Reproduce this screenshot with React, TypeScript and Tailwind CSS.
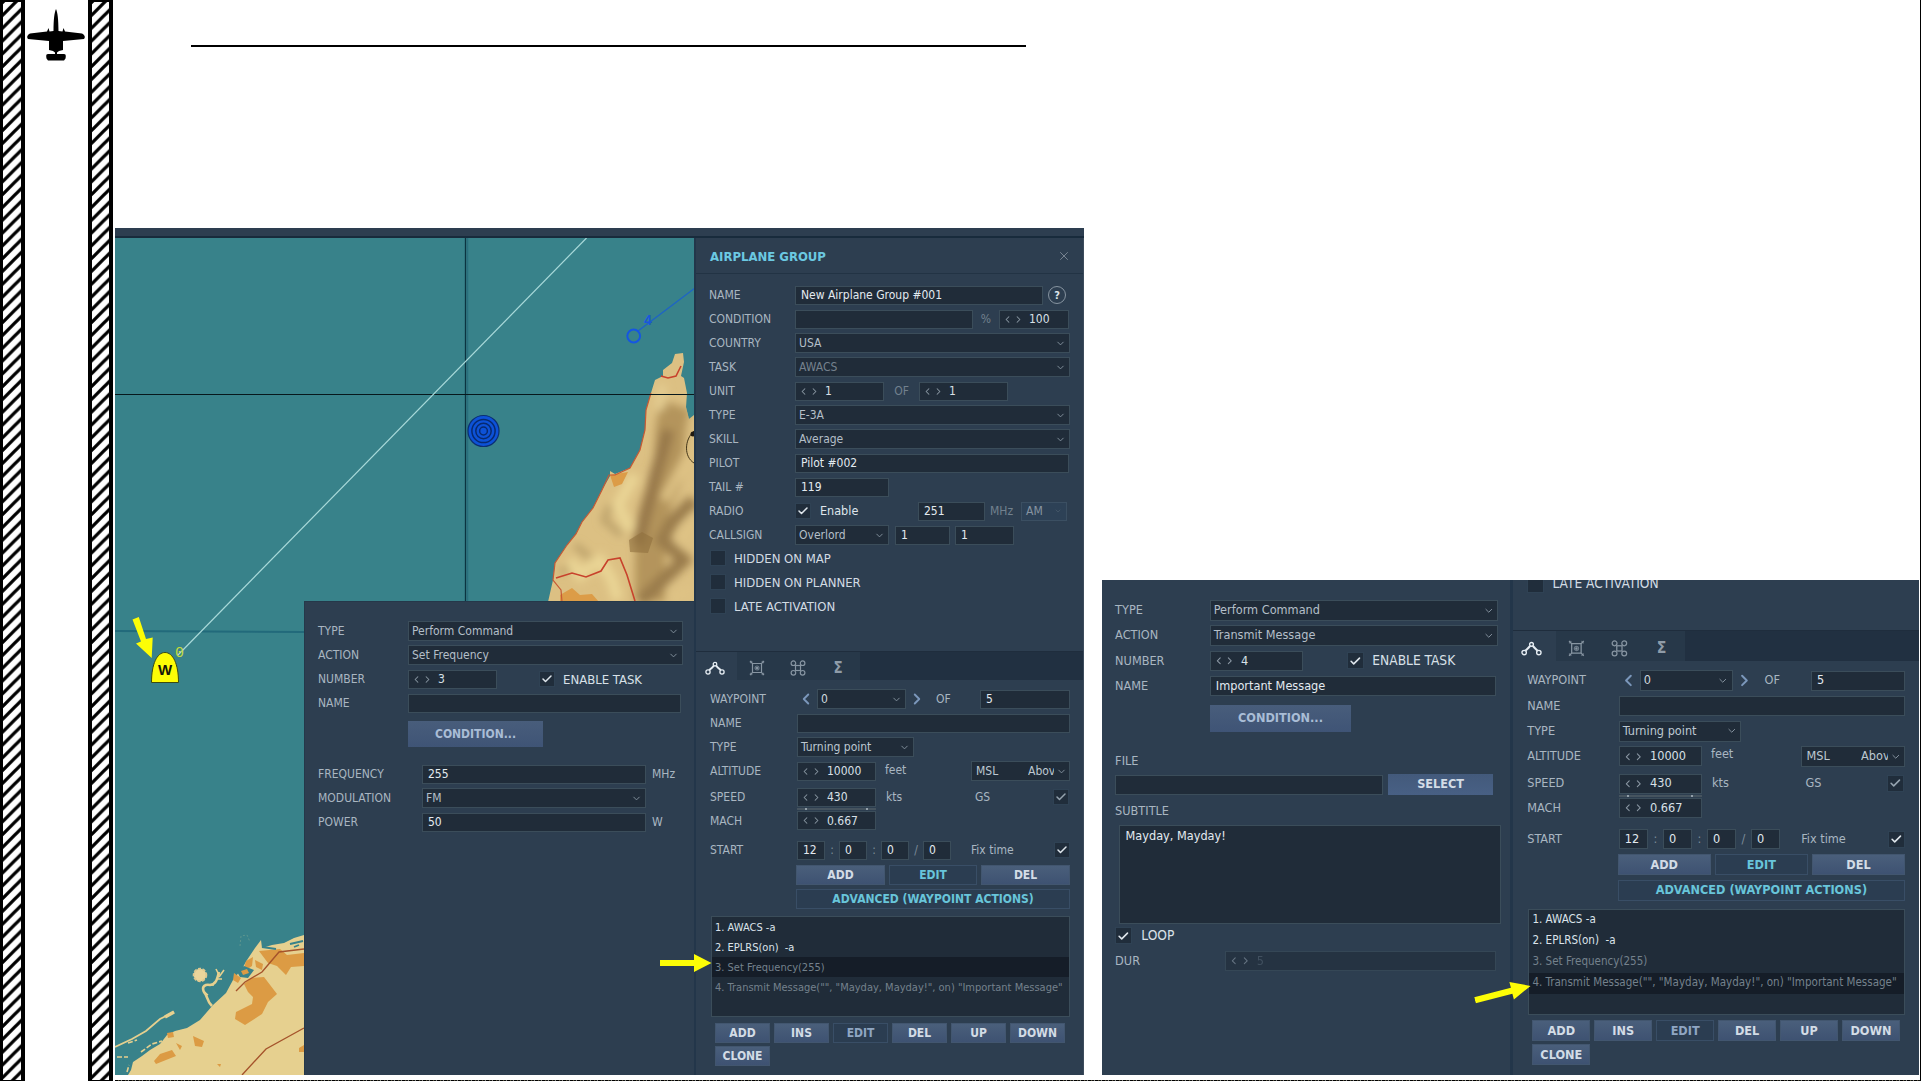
import React from "react";
import { Check, ChevronDown, ChevronLeft, ChevronRight, X } from "lucide-react";

const FIELD = "flex items-center shrink-0 box-border bg-[#202c39] border border-[#3b4d5a] whitespace-pre overflow-hidden";
const BTN =
  "flex items-center justify-center shrink-0 h-5 bg-gradient-to-b from-[#4a5f7b] to-[#3e5272] border border-[#42566f] font-bold text-[#d3dce6]";
const BTN_FLAT =
  "flex items-center justify-center shrink-0 h-5 bg-[#2b3d51] border border-[#394e66] font-bold";

function Field({ w, children = "", className = "" }: { w: string; children?: React.ReactNode; className?: string }) {
  return <div className={`${FIELD} h-[19px] pl-[5px] text-[#e3eaf0] ${w} ${className}`}>{children}</div>;
}

function Select({ w, children, className = "text-[#b4bfc8]" }: { w: string; children: React.ReactNode; className?: string }) {
  return (
    <div className={`${FIELD} h-5 pl-[3px] pr-[3px] justify-between ${w} ${className}`}>
      <span>{children}</span>
      <ChevronDown size={11} strokeWidth={2} className="text-[#8795a1] shrink-0" />
    </div>
  );
}

function Spin({ w, children, className = "" }: { w: string; children: React.ReactNode; className?: string }) {
  return (
    <div className={`${FIELD} h-[19px] pl-[2px] text-[#d8e0e7] ${w} ${className}`}>
      <ChevronLeft size={11} strokeWidth={2.2} className="text-[#8b98a4] shrink-0" />
      <ChevronRight size={11} strokeWidth={2.2} className="text-[#8b98a4] shrink-0" />
      <span className="ml-[5px]">{children}</span>
    </div>
  );
}

function Box({ checked = false, dim = false }: { checked?: boolean; dim?: boolean }) {
  return (
    <div className="flex items-center justify-center shrink-0 size-4 bg-[#202d3b] border border-[#2f4254]">
      {checked && <Check size={12} strokeWidth={3} className={dim ? "text-[#95a3af]" : "text-[#dfe6ec]"} />}
    </div>
  );
}

function Row({ label, lw = "w-[86px]", className = "h-6", children }: { label: string; lw?: string; className?: string; children?: React.ReactNode }) {
  return (
    <div className={`flex items-center shrink-0 ${className}`}>
      <div className={`${lw} shrink-0 text-[#a9b6c1]`}>{label}</div>
      {children}
    </div>
  );
}

function RouteIcon() {
  return (
    <svg width="20" height="14" viewBox="0 0 20 14" fill="none" stroke="#e6edf3" strokeWidth="1.3">
      <circle cx="3" cy="11" r="2.1" />
      <circle cx="17" cy="11" r="2.1" />
      <circle cx="10" cy="3.2" r="1.8" />
      <path d="M4.2 9.2C5.5 8 7.5 6.5 8.7 4.7M11.3 4.7C12.5 6.5 14.5 8 15.8 9.2" strokeWidth="2" />
    </svg>
  );
}

function TargetIcon() {
  return (
    <svg width="16" height="16" viewBox="0 0 16 16" fill="none" stroke="#8795a2" strokeWidth="1.2">
      <path d="M3.5 3.5h9v9h-9zM1 1l3 3M15 1l-3 3M1 15l3-3M15 15l-3-3" />
      <path d="M1 3.2 3.2 1M15 3.2 12.8 1M1 12.8 3.2 15M15 12.8 12.800 15" strokeOpacity=".6" />
      <circle cx="8" cy="8" r="2" strokeOpacity=".7" />
      <circle cx="8" cy="8" r=".6" />
    </svg>
  );
}

function CommandIcon() {
  return (
    <svg width="16" height="16" viewBox="0 0 16 16" fill="none" stroke="#8795a2" strokeWidth="1.2">
      <rect x="5.5" y="5.5" width="5" height="5" />
      <circle cx="3.4" cy="3.2" r="2.3" />
      <circle cx="12.6" cy="3.2" r="2.3" />
      <circle cx="3.4" cy="12.8" r="2.3" />
      <circle cx="12.6" cy="12.8" r="2.3" />
    </svg>
  );
}

function FlagRow({ label }: { label: string }) {
  return (
    <div className="flex items-center shrink-0 h-6 gap-2 pl-px text-[13px] text-[#d3dce4]">
      <Box />
      {label}
    </div>
  );
}

function GroupForm() {
  return (
    <>
      <div className="flex items-center justify-between h-9 shrink-0 pl-[14px] pr-3 pt-px border-b border-[#223344]">
        <span className="font-bold text-[13px] text-[#6bc9e2]">AIRPLANE GROUP</span>
        <X size={14} strokeWidth={1.7} className="text-[#778491]" />
      </div>
      <div className="flex flex-col pl-[13px] pt-[9px] h-[377px] shrink-0">
        <Row label="NAME">
          <Field w="w-[248px]">New Airplane Group #001</Field>
          <div className="flex items-center justify-center ml-[5px] size-[18px] rounded-full border border-[#8794a0] font-bold text-[11px] text-[#dce4ea]">?</div>
        </Row>
        <Row label="CONDITION">
          <Field w="w-[178px]" />
          <span className="w-[26px] text-center text-[#72818e]">%</span>
          <Spin w="w-[70px]">100</Spin>
        </Row>
        <Row label="COUNTRY"><Select w="w-[275px]">USA</Select></Row>
        <Row label="TASK"><Select w="w-[275px]" className="text-[#75818d]">AWACS</Select></Row>
        <Row label="UNIT">
          <Spin w="w-[89px]">1</Spin>
          <span className="w-[35px] text-center text-[#72818e]">OF</span>
          <Spin w="w-[89px]">1</Spin>
        </Row>
        <Row label="TYPE"><Select w="w-[275px]">E-3A</Select></Row>
        <Row label="SKILL"><Select w="w-[275px]">Average</Select></Row>
        <Row label="PILOT"><Field w="w-[274px]">Pilot #002</Field></Row>
        <Row label="TAIL #"><Field w="w-[94px]">119</Field></Row>
        <Row label="RADIO">
          <Box checked />
          <span className="w-[107px] pl-[9px] pt-px text-[12.5px] text-[#dfe6ec]">Enable</span>
          <Field w="w-[67px]">251</Field>
          <span className="w-[36px] pl-[5px] text-[#72818e]">MHz</span>
          <div className="flex items-center justify-between h-[19px] w-[46px] pl-1 pr-1 bg-[#2d4156] border border-[#3b4f62] text-[#8794a1]">
            AM
            <ChevronDown size={8} className="text-[#4b5d6e]" />
          </div>
        </Row>
        <Row label="CALLSIGN">
          <Select w="w-[94px]">Overlord</Select>
          <Field w="w-[55px]" className="ml-[6px]">1</Field>
          <Field w="w-[59px]" className="ml-[5px]">1</Field>
        </Row>
        <div className="flex flex-col -mt-px">
          <FlagRow label="HIDDEN ON MAP" />
          <FlagRow label="HIDDEN ON PLANNER" />
          <FlagRow label="LATE ACTIVATION" />
        </div>
      </div>
    </>
  );
}

function AirplanePanel({ selected, scrolled = false }: { selected: number; scrolled?: boolean }) {
  const actions = [
    "1. AWACS -a",
    "2. EPLRS(on)  -a",
    "3. Set Frequency(255)",
    '4. Transmit Message("", "Mayday, Mayday!", on) "Important Message"',
  ];
  return (
    <div className="flex flex-col w-[388px] shrink-0 bg-[#2d3e50] border-r border-[#3d4c5c] overflow-hidden">
      {scrolled ? (
        <div className="flex flex-col h-[48px] shrink-0 pl-[13px]">
          <div className="-mt-2"><FlagRow label="LATE ACTIVATION" /></div>
        </div>
      ) : (
        <GroupForm />
      )}
      <div className="flex shrink-0 h-[29px] bg-[#213041] border-t border-[#1f2d3d]">
        <div className="flex items-center justify-center w-[41px] pt-1 pr-1 bg-[#2d3e50]"><RouteIcon /></div>
        <div className="flex items-center justify-center w-[40px] pt-1 bg-[#273849]"><TargetIcon /></div>
        <div className="flex items-center justify-center w-[41px] pt-1 bg-[#273849]"><CommandIcon /></div>
        <div className="flex items-center justify-center w-[42px] pt-1 pr-[2px] bg-[#273849] font-bold text-[15px] text-[#8f9ca8]">Σ</div>
      </div>
      <div className="flex flex-col pl-[14px] pt-[7px]">
        <Row label="WAYPOINT" lw="w-[87px]">
          <div className="flex items-center justify-center w-[20px] pr-[2px] text-[#7b97bb]"><ChevronLeft size={18} strokeWidth={2.5} /></div>
          <Select w="w-[89px]" className="text-[#cfd8df]">0</Select>
          <div className="flex items-center justify-center w-[22px] text-[#7b97bb]"><ChevronRight size={18} strokeWidth={2.5} /></div>
          <span className="w-[52px] pl-2 text-[#a9b6c1]">OF</span>
          <Field w="w-[90px]" className="text-[#cfd8df]">5</Field>
        </Row>
        <Row label="NAME" lw="w-[87px]"><Field w="w-[273px]" /></Row>
        <Row label="TYPE" lw="w-[87px]"><Select w="w-[117px]" className="text-[#bdc8d1]">Turning point</Select></Row>
        <Row label="ALTITUDE" lw="w-[87px]">
          <Spin w="w-[79px]">10000</Spin>
          <span className="w-[95px] pl-[9px] pb-[3px] text-[#a9b6c1]">feet</span>
          <div className={`${FIELD} h-5 w-[99px] pl-1 pr-[3px] text-[#bdc8d1]`}>
            <span className="w-[52px] shrink-0">MSL</span>
            <span className="w-[26px] shrink-0 overflow-hidden">Above</span>
            <ChevronDown size={11} className="ml-[2px] text-[#8795a1] shrink-0" />
          </div>
        </Row>
        <Row label="SPEED" lw="w-[87px]" className="h-[22px] mt-[3px]">
          <Spin w="w-[79px]">430</Spin>
          <span className="w-[99px] pl-[10px] text-[#a9b6c1]">kts</span>
          <span className="w-[78px] text-[#a9b6c1]">GS</span>
          <Box checked dim />
        </Row>
        <div className="flex justify-between ml-[87px] w-[79px] h-[2px] px-[8px] bg-[#46545f]">
          <span className="w-[2px] bg-[#93a0aa]" />
          <span className="w-[2px] bg-[#93a0aa]" />
        </div>
        <Row label="MACH" lw="w-[87px]" className="h-[21px]"><Spin w="w-[79px]">0.667</Spin></Row>
        <Row label="START" lw="w-[87px]" className="h-5 mt-[9px]">
          <Field w="w-7">12</Field>
          <span className="w-[14px] text-center text-[#7c8b98]">:</span>
          <Field w="w-7">0</Field>
          <span className="w-[14px] text-center text-[#7c8b98]">:</span>
          <Field w="w-7">0</Field>
          <span className="w-[14px] text-center text-[#7c8b98]">/</span>
          <Field w="w-7">0</Field>
          <span className="w-[103px] pl-5 text-[#a9b6c1]">Fix time</span>
          <Box checked />
        </Row>
        <div className="flex gap-1 mt-[4.5px] ml-[86px]">
          <div className={`${BTN} w-[89px]`}>ADD</div>
          <div className={`${BTN_FLAT} w-[88px] text-[#68c5da]`}>EDIT</div>
          <div className={`${BTN} w-[89px]`}>DEL</div>
        </div>
        <div className={`${BTN_FLAT} mt-1 ml-[86px] w-[274px] text-[#68c5da]`}>ADVANCED (WAYPOINT ACTIONS)</div>
        <div className="flex flex-col mt-[7.5px] ml-px w-[359px] h-[101px] bg-[#202c39] border border-[#3b4d5a] text-[11px] whitespace-pre">
          {actions.map((t, i) => (
            <div
              key={t}
              className={`flex items-center h-5 pl-[3px] ${i === selected ? "bg-[#151d28]" : ""} ${i < 2 ? "text-[#dbe3ea]" : "text-[#74818c]"}`}
            >
              {t}
            </div>
          ))}
        </div>
        <div className="flex flex-wrap gap-x-1 gap-y-[3px] mt-[5.5px] ml-[5px] w-[356px]">
          {["ADD", "INS", "EDIT", "DEL", "UP", "DOWN", "CLONE"].map((t) =>
            t === "EDIT" ? (
              <div key={t} className={`${BTN_FLAT} w-[55px] text-[#8fa6c2]`}>{t}</div>
            ) : (
              <div key={t} className={`${BTN} w-[55px]`}>{t}</div>
            ),
          )}
        </div>
      </div>
    </div>
  );
}

function CommandHead({ action, number, name }: { action: string; number: string; name: string }) {
  return (
    <>
      <Row label="TYPE" lw="w-[90px]"><Select w="w-[275px]">Perform Command</Select></Row>
      <Row label="ACTION" lw="w-[90px]"><Select w="w-[275px]">{action}</Select></Row>
      <Row label="NUMBER" lw="w-[90px]">
        <Spin w="w-[89px]">{number}</Spin>
        <div className="flex items-center gap-2 ml-[42px] text-[13px] text-[#d9e1e8]"><Box checked />ENABLE TASK</div>
      </Row>
      <Row label="NAME" lw="w-[90px]"><Field w="w-[273px]">{name}</Field></Row>
      <div className="flex items-center justify-center shrink-0 mt-[6px] ml-[90px] w-[135px] h-[26px] bg-gradient-to-b from-[#485d7b] to-[#3f5476] font-bold text-[#a9bdd6]">
        CONDITION...
      </div>
    </>
  );
}

function FrequencyPanel() {
  return (
    <div className="relative flex flex-col w-[390px] h-[474px] pl-[13px] pt-[17px] bg-[#2d3e50] border-t border-l border-[#25384a]">
      <CommandHead action="Set Frequency" number="3" name="" />
      <div className="flex flex-col mt-[15px]">
        <Row label="FREQUENCY" lw="w-[104px]"><Field w="w-[224px]">255</Field><span className="ml-[6px] text-[#a9b6c1]">MHz</span></Row>
        <Row label="MODULATION" lw="w-[104px]"><Select w="w-[224px]">FM</Select></Row>
        <Row label="POWER" lw="w-[104px]"><Field w="w-[224px]">50</Field><span className="ml-[6px] text-[#a9b6c1]">W</span></Row>
      </div>
    </div>
  );
}

function MessagePanel() {
  return (
    <div className="flex flex-col w-[389px] shrink-0 pl-[12.5px] pt-[17px] bg-[#2d3e50]">
      <CommandHead action="Transmit Message" number="4" name="Important Message" />
      <div className="mt-[16px] h-6 flex items-center text-[#a9b6c1]">FILE</div>
      <div className="flex items-center">
        <Field w="w-[255px]" className="h-5" />
        <div className="flex items-center justify-center ml-[5px] w-[100px] h-5 bg-gradient-to-b from-[#435a7b] to-[#486085] font-bold text-[#d3dce6]">SELECT</div>
      </div>
      <div className="mt-[5px] h-5 flex items-center text-[#a9b6c1]">SUBTITLE</div>
      <div className="mt-[3px] ml-[4px] w-[364px] h-[95px] pl-[5px] pt-[4px] bg-[#202c39] border border-[#3b4d5a] text-[#e3eaf0]">Mayday, Mayday!</div>
      <div className="flex items-center gap-[9px] mt-[3px] text-[13px] text-[#d9e1e8]"><Box checked />LOOP</div>
      <div className="flex items-center mt-[4px] h-6 text-[#a9b6c1]">
        <span className="w-[105px]">DUR</span>
        <div className="opacity-60"><Spin w="w-[258px]"><span className="text-[#4f5d6a]">5</span></Spin></div>
      </div>
    </div>
  );
}

function Relief() {
  return (
    <>
      <defs>
        <filter id="soft" x="-20%" y="-20%" width="140%" height="140%"><feGaussianBlur stdDeviation="4.5" /></filter>
        <clipPath id="cape">
          <path d="M683 353 675 354 672 363 663 370 663 376 655 380 651 393 646 410 645 430 640 450 630 468 615 474 610 471 610 476 602 490 593 508 582 522 576 534 567 545 555 563 553 580 548 602 694 602 694 415 689 419 686 407 687 393 684 378 681 376 684 362Z" />
        </clipPath>
      </defs>
      <g clipPath="url(#cape)">
        <rect x="540" y="345" width="160" height="260" fill="#dcc083" />
        <g filter="url(#soft)" fill="none">
          <path d="M676 405C664 440 676 460 662 490S650 540 650 602" stroke="#b4945c" strokeWidth="30" />
          <path d="M668 430C664 450 656 468 652 490L644 520 638 545" stroke="#96774a" strokeWidth="12" />
          <path d="M694 500 672 522 662 540 684 560 640 602" stroke="#9a7b4b" strokeWidth="13" />
          <path d="M610 505 604 520 622 535M575 545 590 558M560 572 575 566" stroke="#b89e68" strokeWidth="6" />
          <path d="M694 445 676 478 664 500M694 515 680 545M690 590 670 600" stroke="#dfc385" strokeWidth="9" />
          <path d="M635 475 618 505 630 530M570 560 580 575 600 560 612 580 618 600" stroke="#ead595" strokeWidth="11" />
          <path d="M662 385 660 410" stroke="#e4cd92" strokeWidth="9" />
        </g>
        <path d="M629 540 642 532 653 538 648 553 630 552Z" fill="#8f6f3d" opacity=".6" />
        <path d="M610 475 628 472 622 484 614 487ZM560 595 572 588 580 595 592 594 599 602H560ZM641 446 636 458 630 465Z" fill="#dc9c47" />
      </g>
      <path d="M651 393 646 410 645 430 640 450 630 468 615 475 609 475 602 490 593 508 582 522 576 534 567 545 555 563 553 580 561 590 562 602" fill="none" stroke="#c65a35" strokeWidth="1.2" />
      <path d="M661 376 668 378 676 376 681 366M556 578 572 573 586 577 601 571 608 560 620 558 627 575 635 601" fill="none" stroke="#c8422c" strokeWidth="1.6" />
      <path d="M694 431C684 440 684 457 694 463" fill="none" stroke="#443619" />
      <circle cx="693" cy="434" r="2.5" fill="#201a10" />
    </>
  );
}

function DubaiCoast() {
  return (
    <>
      <path d="M304 935 294 938 284 943 272 945 262 948 261 940 255 948 247 960 243 967 233 980 226 993 213 1005 200 1020 187 1028 175 1031 167 1035 160 1044 150 1050 142 1056 133 1062 131 1070 128 1075H304Z" fill="#e6d08f" />
      <g fill="#dc9b44">
        <path d="M259 951 280 949 287 955 304 953V966L291 967 286 975 277 966 268 963Z" />
        <path d="M246 961 253 957 252 966 243 972ZM255 960 263 964 262 970 256 967ZM234 973 241 978 238 983 233 980Z" />
        <path d="M244 984 251 978 264 977 277 994 268 1002 262 1014 245 1025 235 1019 236 1012 252 1004 253 997 248 992Z" />
        <path d="M193 1036 204 1041 202 1047 195 1046ZM176 1043 182 1046 180 1050ZM154 1061 160 1054 172 1050 176 1056 166 1060 156 1064ZM299 1048 304 1045V1052H299ZM167 1033 173 1032 174 1037 168 1038ZM217 1064 221 1064 220 1067Z" />
      </g>
      <path d="M238 993 249 1002" stroke="#e6d08f" strokeWidth="3" />
      <path d="M236 970 244 966 254 970 248 978 240 977Z" fill="#38828a" />
      <path d="M241 971 247 969 249 973 243 975Z" fill="#dc9b44" />
      <g fill="none" stroke="#e6d08f">
        <path d="M212 1006C206 1000 208 996 204 992 201 986 206 984 210 985 216 984 217 980 219 972" strokeWidth="2.6" />
        <path d="M219 975 216 969M219 977 224 970M206 985 214 985M218 979 222 979M203 991 208 995" strokeWidth="1.6" />
        <path d="M174 1012 160 1019 146 1031 132 1039 115 1047" strokeWidth="1.8" />
        <path d="M174 1012 165 1017" strokeWidth="3.5" />
        <path d="M128 1043 137 1040M117 1057H128M141 1052 152 1044 162 1041M127 1072 129 1065" strokeWidth="1.6" strokeDasharray="5 2" />
        <path d="M240 946 241 936 247 935 250 942" stroke="#5d968f" strokeDasharray="2 2" />
      </g>
      <path d="M262 947 276 949M290 944 303 941M294 947 299 945" stroke="#38828a" strokeWidth="1.8" />
      <circle cx="200" cy="975" r="6.3" fill="#ead59b" stroke="#ddc890" strokeWidth="2" strokeDasharray="3 1.5" />
      <path d="M236 991 245 982 262 972 279 952 304 949M242 1075 266 1049 304 1028" fill="none" stroke="#a5532b" strokeWidth="1.4" />
    </>
  );
}

function MapView() {
  return (
    <svg className="absolute inset-0" width="580" height="837" viewBox="115 238 580 837">
      <rect x="115" y="238" width="580" height="837" fill="#38828a" />
      <path d="M115 631 304 632" stroke="#226a7b" strokeWidth="2" />
      <path d="M467.5 238V602" stroke="#2a6f7e" strokeWidth="1.5" />
      <path d="M465.5 238V602" stroke="#0b3340" strokeWidth="1.3" />
      <Relief />
      <DubaiCoast />
      <path d="M115 394.5H695" stroke="#07181c" strokeWidth="1.1" />
      <path d="M586.5 238 178 655" stroke="#a9dada" strokeWidth="1.2" />
      <path d="M638 331 695 288" stroke="#1d63c8" strokeWidth="1.3" />
      <circle cx="633.7" cy="336" r="6.4" fill="none" stroke="#1556e2" strokeWidth="2" />
      <text x="644" y="325" fontSize="14" fontWeight="bold" fill="#1a56dc" className="font-['Liberation_Sans',sans-serif]">4</text>
      <circle cx="483.5" cy="431" r="15.5" fill="#0d52d8" stroke="#0b2f73" strokeWidth="1.2" />
      <g fill="none" stroke="#072a70" strokeWidth="1.5">
        <circle cx="483.5" cy="431" r="11.6" />
        <circle cx="483.5" cy="431" r="7.7" />
        <circle cx="483.5" cy="431" r="3.9" />
      </g>
      <path d="M151.5 682.5C151.5 664 157 652.5 165 652.5S178.5 664 178.5 682.5Z" fill="#fdfd06" stroke="#3c4a12" />
      <text x="165" y="675" textAnchor="middle" fontSize="15" fontWeight="bold" fill="#16160a" className="font-['Liberation_Sans',sans-serif]">W</text>
      <text x="175" y="657" fontSize="15" fill="#c4dc3c" className="font-['Liberation_Mono',monospace]">0</text>
      <path d="M132.5 619.5 138.8 617 146 639 152.7 637.5 151.7 658 136 643.5 141 641.5Z" fill="#fdfd06" />
    </svg>
  );
}

function Hatch({ id, w }: { id: string; w: number }) {
  return (
    <svg width={w} height="1081" className="shrink-0">
      <defs>
        <pattern id={id} width="12.8" height="12.8" patternUnits="userSpaceOnUse">
          <path d="M-3.2 16 16 -3.2M-9.6 9.6 9.6 -9.6M3.2 22.4 22.4 3.2" stroke="#000" strokeWidth="3.3" />
        </pattern>
      </defs>
      <rect width={w} height="1081" fill="#fff" />
      <rect width={w} height="1081" fill={`url(#${id})`} />
    </svg>
  );
}

function Arrow({ className, rotate }: { className: string; rotate: number }) {
  return (
    <svg viewBox="0 0 52 20" preserveAspectRatio="none" className={`absolute h-5 ${className}`} style={{ transform: `rotate(${rotate}deg)` }}>
      <path d="M0 7H34V1L51.5 10 34 19V13H0Z" fill="#fdfd06" />
    </svg>
  );
}

export default function App() {
  return (
    <div className="relative flex w-[1921px] h-[1081px] overflow-hidden bg-white border-r border-black text-[12px] leading-none font-['DejaVu_Sans_Condensed','DejaVu_Sans',sans-serif] [font-stretch:condensed]">
      <div className="flex shrink-0 box-border w-[25px] border-t-2 border-b border-l-[3px] border-r-4 border-black overflow-hidden">
        <Hatch id="hatchLeft" w={18} />
      </div>
      <div className="flex justify-center shrink-0 w-[63px] pt-[8px] pr-[2px]">
        <svg width="58" height="54" viewBox="27 8 58 54" className="shrink-0">
          <path d="M56 9C54.3 13 53.6 19 53.5 31L49.5 31.5 48.5 28 47 31.5 30 33.5C27 35 26.5 37.5 28 39L49 41V50L53 51 55 52.5V54H48C46 54 46 56 46.5 58.5L48 60.5H64L65.5 58.5C66 56 66 54 64 54H57V52.5L59 51 63 50V41L84 39C85.5 37.5 85 35 82 33.5L65 31.5 63.5 28 62.5 31.5 58.5 31C58.4 19 57.7 13 56 9Z" fill="#000" />
        </svg>
      </div>
      <div className="flex shrink-0 box-border w-[25px] border-t-2 border-b border-x-4 border-black overflow-hidden">
        <Hatch id="hatchRight" w={17} />
      </div>
      <main className="flex flex-col ml-[2px] w-[1805px] shrink-0">
        <div className="ml-[76px] mt-[45px] w-[835px] h-[2px] shrink-0 bg-black" />
        <div className="flex items-end mt-[181px] h-[847px] shrink-0">
          <section className="relative flex flex-col w-[969px] h-[847px] shrink-0">
            <div className="h-[10px] shrink-0 bg-[#2d3e50] border-b-2 border-[#182b3c]" />
            <div className="flex h-[837px]">
              <div className="relative flex items-end justify-end w-[579px] shrink-0 overflow-hidden">
                <MapView />
                <FrequencyPanel />
              </div>
              <div className="w-[2px] shrink-0 bg-[#23364a]" />
              <AirplanePanel selected={2} />
            </div>
            <Arrow className="w-[52px] left-[545px] top-[725px]" rotate={0} />
          </section>
          <section className="relative ml-[18px] w-[817px] h-[495px] shrink-0">
            <div className="flex w-[778px] h-[471.4px] [zoom:1.05] overflow-hidden bg-[#2d3e50]">
              <MessagePanel />
              <div className="w-[2px] shrink-0 bg-[#23364a]" />
              <AirplanePanel selected={3} scrolled />
            </div>
            <Arrow className="w-[58px] left-[372px] top-[403px]" rotate={-14.5} />
          </section>
        </div>
        <div className="mt-[5px] h-px shrink-0 bg-[repeating-linear-gradient(90deg,#000_0_3px,#55503a_3px_4px,#111_4px_6px,#8a8a80_6px_7px)]" />
      </main>
    </div>
  );
}
